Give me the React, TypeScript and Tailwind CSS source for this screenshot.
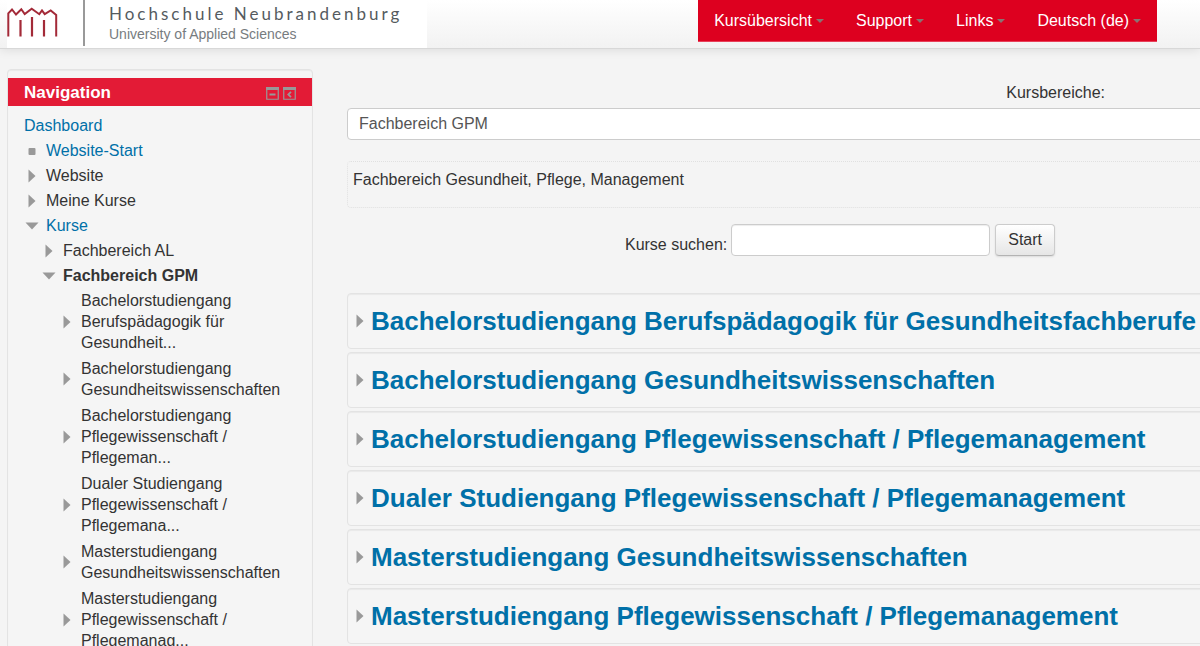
interface NavItem {
  label: string;
  level: number;
  icon: "dot" | "right" | "down";
  active?: boolean;
  link?: boolean;
}

const menuItems = ["Kursübersicht", "Support", "Links", "Deutsch (de)"];

const navItems: NavItem[] = [
  { label: "Website-Start", level: 0, icon: "dot", link: true },
  { label: "Website", level: 0, icon: "right" },
  { label: "Meine Kurse", level: 0, icon: "right" },
  { label: "Kurse", level: 0, icon: "down", link: true },
  { label: "Fachbereich AL", level: 1, icon: "right" },
  { label: "Fachbereich GPM", level: 1, icon: "down", active: true },
  { label: "Bachelorstudiengang Berufspädagogik für Gesundheit...", level: 2, icon: "right" },
  { label: "Bachelorstudiengang Gesundheitswissenschaften", level: 2, icon: "right" },
  { label: "Bachelorstudiengang Pflegewissenschaft / Pflegeman...", level: 2, icon: "right" },
  { label: "Dualer Studiengang Pflegewissenschaft / Pflegemana...", level: 2, icon: "right" },
  { label: "Masterstudiengang Gesundheitswissenschaften", level: 2, icon: "right" },
  { label: "Masterstudiengang Pflegewissenschaft / Pflegemanag...", level: 2, icon: "right" },
];

const categories = [
  "Bachelorstudiengang Berufspädagogik für Gesundheitsfachberufe",
  "Bachelorstudiengang Gesundheitswissenschaften",
  "Bachelorstudiengang Pflegewissenschaft / Pflegemanagement",
  "Dualer Studiengang Pflegewissenschaft / Pflegemanagement",
  "Masterstudiengang Gesundheitswissenschaften",
  "Masterstudiengang Pflegewissenschaft / Pflegemanagement",
];

const levelPadding = ["pl-4", "pl-[33px]", "pl-[51px] pb-px"];

function TreeIcon({ type }: { type: NavItem["icon"] }) {
  return (
    <svg viewBox="0 0 16 16" className="size-4 shrink-0 fill-[#999]" aria-hidden="true">
      {type === "dot" && <rect x="4.500" y="5" width="7" height="7" rx="1" />}
      {type === "right" && <path d="M4.500 1.500 11.500 8l-7 6.500z" />}
      {type === "down" && <path d="M1.500 4.500h13L8 11.500z" />}
    </svg>
  );
}

function Logo() {
  return (
    <a href="#" className="ml-[7px] flex h-12 w-[420px] bg-white">
      <svg viewBox="0 0 52 48" className="h-12 w-[52px]" fill="none" stroke="#a32a38" aria-hidden="true">
        <path
          d="M1.300 36.500V13.300L5 9.500 9 14.500 14.300 9.200 17.700 14 24.700 8.700 32.300 14.200 35 10.500 37.700 14.200 43.700 10.500 49.200 15V36.500"
          strokeWidth="2"
        />
        <path d="M13.500 20v16.500M25 17v19.500M37 20v16.500" strokeWidth="2.200" />
      </svg>
      <span className="ml-6 h-[46px] w-[2px] bg-[#999]" />
      <span className="ml-6 flex flex-col pt-1">
        <span className="font-[Lato,sans-serif] text-[17px] leading-5 tracking-[3px] whitespace-nowrap text-[#555b60]">
          Hochschule Neubrandenburg
        </span>
        <span className="text-[14px] leading-5 text-[#777c80]">University of Applied Sciences</span>
      </span>
    </a>
  );
}

function Header() {
  return (
    <header className="flex h-[49px] items-start justify-between border-b border-[#d8d8d8] bg-linear-to-b from-white to-[#f2f2f2] shadow-[0_1px_10px_rgba(0,0,0,0.1)]">
      <Logo />
      <nav className="mr-[43px] flex h-[42px] border-b border-[#e8405a] bg-[#dd001f]">
        {menuItems.map((item) => (
          <button key={item} type="button" className="flex items-center gap-1 px-4 text-[16px] text-white">
            {item}
            <span className="border-x-4 border-t-4 border-x-transparent border-t-[#8a7373]" />
          </button>
        ))}
      </nav>
    </header>
  );
}

function Sidebar() {
  return (
    <aside className="w-[306px] shrink-0 rounded border border-[#e3e3e3] bg-[#f5f5f5] pt-2 shadow-[inset_0_1px_1px_rgba(0,0,0,0.05)]">
      <div className="flex h-7 items-center justify-between bg-[#e31b36] px-4">
        <h2 className="pt-px text-[17px] font-bold text-white">Navigation</h2>
        <div className="flex gap-1 pt-[2px]">
          <button type="button" aria-label="Block verbergen">
            <svg viewBox="0 0 13 13" className="block size-[13px]" fill="none" stroke="#999">
              <path d="M.75 1v11.250h11.500V1" strokeWidth="1.200" />
              <path d="M0 1.500h13" strokeWidth="3" />
              <path d="M3.500 7.500h6" strokeWidth="2" />
            </svg>
          </button>
          <button type="button" aria-label="Block andocken">
            <svg viewBox="0 0 13 13" className="block size-[13px]" fill="none" stroke="#999">
              <path d="M.75 1v11.250h11.500V1" strokeWidth="1.200" />
              <path d="M0 1.500h13" strokeWidth="3" />
              <path d="M8 4.800 5.300 7.500 8 10.200" strokeWidth="1.800" />
            </svg>
          </button>
        </div>
      </div>
      <nav className="flex flex-col gap-1 pt-[9px] leading-[21px]">
        <a href="#" className="pl-4 text-[#0070a8]">Dashboard</a>
        {navItems.map((item) => (
          <div key={item.label} className={`flex items-center gap-[6px] pr-6 ${levelPadding[item.level]}`}>
            <TreeIcon type={item.icon} />
            <a
              href="#"
              className={item.active ? "font-bold text-[#333]" : item.link ? "text-[#0070a8]" : "text-[#333]"}
            >
              {item.label}
            </a>
          </div>
        ))}
      </nav>
    </aside>
  );
}

function CourseArea() {
  return (
    <main className="-mr-[133px] ml-[34px] min-w-0 flex-1 pt-[13px]">
      <div className="flex flex-col">
        <label htmlFor="category" className="pr-57 text-right leading-[22px]">Kursbereiche:</label>
        <select
          id="category"
          className="mt-1 h-8 w-full appearance-none rounded border border-[#ccc] bg-white px-[11px] text-[#555]"
        >
          <option>Fachbereich GPM</option>
        </select>
      </div>

      <div className="mt-[21px] h-[47px] rounded border border-dotted border-[#e0e0e0] px-[5px] pt-[7px] leading-[22px]">
        Fachbereich Gesundheit, Pflege, Management
      </div>

      <form className="mt-4 flex justify-center" onSubmit={(e) => e.preventDefault()}>
        <label htmlFor="search" className="mr-1 pt-[10px] leading-[22px]">Kurse suchen:</label>
        <input
          id="search"
          type="text"
          className="h-8 w-[259px] rounded border border-[#ccc] bg-white px-2 shadow-[inset_0_1px_1px_rgba(0,0,0,0.075)]"
        />
        <button
          type="submit"
          className="ml-[5px] h-8 rounded border border-[#ccc] border-b-[#b3b3b3] bg-linear-to-b from-white to-[#e6e6e6] px-3 shadow-[0_1px_2px_rgba(0,0,0,0.1)]"
        >
          Start
        </button>
      </form>

      <div className="mt-[37px] flex flex-col gap-[3px]">
        {categories.map((name) => (
          <div
            key={name}
            className="flex h-14 items-center gap-[3px] rounded border border-[#e3e3e3] bg-[#f5f5f5] pl-1 shadow-[inset_0_1px_1px_rgba(0,0,0,0.05)]"
          >
            <TreeIcon type="right" />
            <h3 className="text-[26px] font-bold whitespace-nowrap">
              <a href="#" className="text-[#0070a8]">{name}</a>
            </h3>
          </div>
        ))}
      </div>
    </main>
  );
}

export default function App() {
  return (
    <div className="h-screen overflow-hidden bg-[#f4f4f4] font-['Liberation_Sans',Arial,sans-serif] text-[16px] text-[#333]">
      <Header />
      <div className="flex items-start pt-5 pl-[7px]">
        <Sidebar />
        <CourseArea />
      </div>
    </div>
  );
}
